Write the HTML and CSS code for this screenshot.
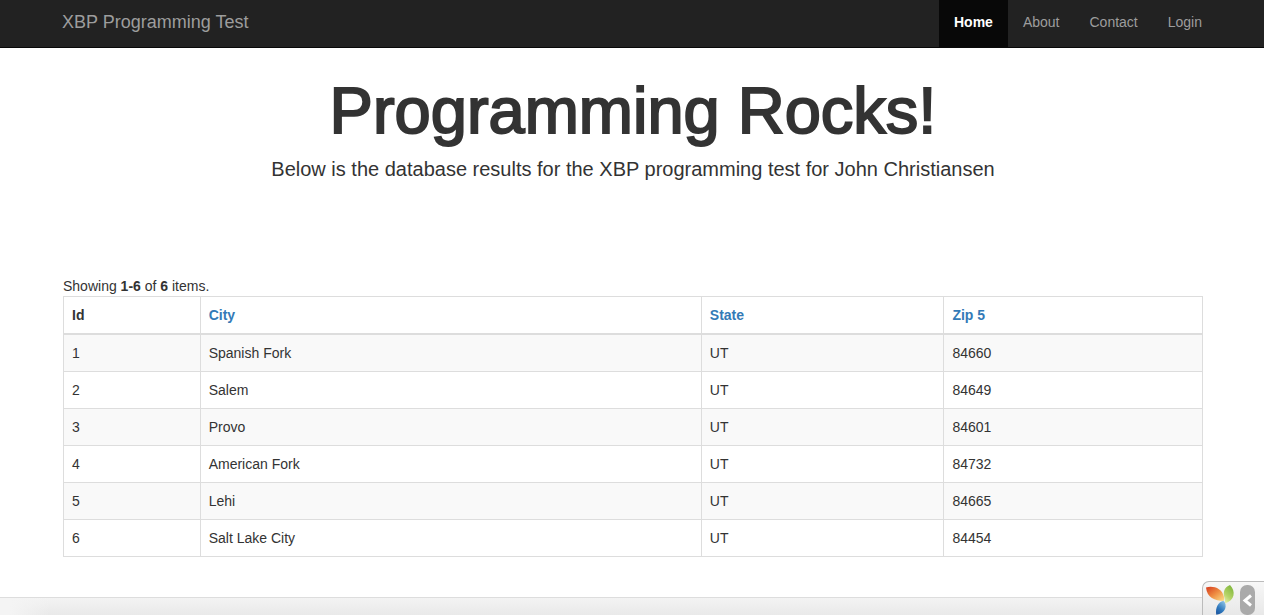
FILE: index.html
```html
<!DOCTYPE html>
<html lang="en">
<head>
<meta charset="utf-8">
<meta name="viewport" content="width=device-width, initial-scale=1">
<title>XBP Programming Test</title>
<link rel="stylesheet" href="styles.css">
</head>
<body>
<header class="navbar">
  <div class="container navbar-inner">
    <a class="brand" href="#">XBP Programming Test</a>
    <nav class="nav">
      <a class="nav-link active" href="#">Home</a>
      <a class="nav-link" href="#">About</a>
      <a class="nav-link" href="#">Contact</a>
      <a class="nav-link" href="#">Login</a>
    </nav>
  </div>
</header>
<main class="container main">
  <section class="hero">
    <h1 class="title">Programming Rocks!</h1>
    <p class="lead">Below is the database results for the XBP programming test for John Christiansen</p>
  </section>
  <div class="summary">Showing <b>1-6</b> of <b>6</b> items.</div>
  <table class="grid">
    <colgroup><col class="col-id"><col class="col-city"><col class="col-state"><col></colgroup>
    <thead>
      <tr><th>Id</th><th><a href="#">City</a></th><th><a href="#">State</a></th><th><a href="#">Zip 5</a></th></tr>
    </thead>
    <tbody>
      <tr><td>1</td><td>Spanish Fork</td><td>UT</td><td>84660</td></tr>
      <tr><td>2</td><td>Salem</td><td>UT</td><td>84649</td></tr>
      <tr><td>3</td><td>Provo</td><td>UT</td><td>84601</td></tr>
      <tr><td>4</td><td>American Fork</td><td>UT</td><td>84732</td></tr>
      <tr><td>5</td><td>Lehi</td><td>UT</td><td>84665</td></tr>
      <tr><td>6</td><td>Salt Lake City</td><td>UT</td><td>84454</td></tr>
    </tbody>
  </table>
</main>
<footer class="footer"></footer>
<div class="debug">
  <svg class="debug-logo" width="30" height="30" viewBox="0 0 30 30" aria-hidden="true">
    <defs>
      <linearGradient id="red" x1="0" y1="0" x2="1" y2="1"><stop offset="0" stop-color="#d63a1e"/><stop offset=".5" stop-color="#ee8d42"/><stop offset="1" stop-color="#fbe08a"/></linearGradient>
      <linearGradient id="green" x1="0.7" y1="0" x2="0.2" y2="1"><stop offset="0" stop-color="#7fb63c"/><stop offset=".6" stop-color="#b5d468"/><stop offset="1" stop-color="#e6efae"/></linearGradient>
      <linearGradient id="blue" x1="0.8" y1="0" x2="0.2" y2="1"><stop offset="0" stop-color="#8ec4e6"/><stop offset=".6" stop-color="#2f78bd"/><stop offset="1" stop-color="#1c57a0"/></linearGradient>
    </defs>
    <path fill="url(#red)" d="M0 2.500C7 .5 16 3 18 12C18.500 14 18 15 17.500 16C9 15.500 1 13 0 2.500Z"/>
    <path fill="url(#green)" d="M24 0C30 6 29 15.500 18.800 18.500C19.200 16 19 14 18 11C17 5 20 1.500 24 0Z"/>
    <path fill="url(#blue)" d="M17.500 15.700C22 20 19.500 28.500 10.300 29.700C9 23 12 17 17.500 15.700Z"/>
  </svg>
  <button class="debug-toggle" type="button" aria-label="Show toolbar">
    <svg width="15" height="30" viewBox="0 0 15 30" aria-hidden="true"><path d="M11 10.500L5 15.500L11 20.500" fill="none" stroke="#fff" stroke-width="3"/></svg>
  </button>
</div>
</body>
</html>
```

FILE: styles.css
```css
* { box-sizing: border-box; }
body {
  margin: 0;
  min-height: 100vh;
  display: flex;
  flex-direction: column;
  background: #fff;
  color: #333;
  font: 14px/20px "Liberation Sans", Arial, sans-serif;
}
a { color: #337ab7; text-decoration: none; }
.container { width: 100%; max-width: 1170px; margin: 0 auto; padding: 0 15px; }
.navbar { background: #222; border-bottom: 1px solid #080808; }
.navbar-inner { display: flex; justify-content: space-between; }
.brand { padding: 12px 0 15px; font-size: 18px; color: #9d9d9d; }
.nav { display: flex; margin-right: -15px; }
.nav-link { padding: 12px 15px 15px; color: #9d9d9d; }
.nav-link.active { background: #080808; color: #fff; font-weight: 700; }
.main { padding: 0 14px 40px 16px; }
.hero { text-align: center; padding: 28px 0 94px; }
.title { margin: 0 0 10px; font-size: 65px; line-height: 70px; font-weight: 400; -webkit-text-stroke: 2px #333; }
.lead { margin: 0; font-size: 20px; line-height: 26px; }
.grid { width: 100%; table-layout: fixed; border-collapse: collapse; }
.col-id { width: 12%; }
.col-city { width: 44%; }
.col-state { width: 21.3%; }
.grid th, .grid td { padding: 8px; border: 1px solid #ddd; text-align: left; }
.grid thead th { border-bottom-width: 2px; }
.grid tbody tr:nth-child(odd) { background: #f9f9f9; }
.footer {
  flex: 1 0 17px;
  border-top: 1px solid #ddd;
  background: linear-gradient(to right, #f4f4f4 10px, transparent 50px), linear-gradient(#f3f3f3, #e9e9e9);
}
.debug {
  position: fixed;
  right: 0;
  bottom: 0;
  display: flex;
  gap: 4px;
  padding: 3px 9px 0 3px;
  border: 1px solid #bbb;
  border-width: 1px 0 0 1px;
  border-radius: 7px 0 0 0;
  background: linear-gradient(#f7f7f7, #e8e8e8);
}
.debug-toggle { width: 15px; height: 30px; padding: 0; border: 0; border-radius: 7px; background: #aaa; }
.debug-logo, .debug-toggle svg { display: block; }
```
